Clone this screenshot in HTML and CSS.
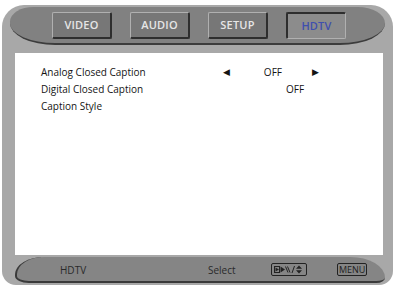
FILE: index.html
```html
<!DOCTYPE html>
<html>
<head>
  <title>HDTV Setup</title>
  <link rel="stylesheet" href="styles.css">
</head>
<body>
  <div class="tv-frame">
    <div class="top-band">
      <div class="tab">VIDEO</div>
      <div class="tab">AUDIO</div>
      <div class="tab">SETUP</div>
      <div class="tab selected">HDTV</div>
    </div>
    <div class="menu-panel">
      <div class="menu-row">
        <span class="item-name">Analog Closed Caption</span>
        <span class="item-value">
          <span class="arrow">&#9664;</span>
          <span class="value-text">OFF</span>
          <span class="arrow">&#9654;</span>
        </span>
      </div>
      <div class="menu-row">
        <span class="item-name">Digital Closed Caption</span>
        <span class="item-value plain">OFF</span>
      </div>
      <div class="menu-row">
        <span class="item-name">Caption Style</span>
      </div>
    </div>
    <div class="bottom-band">
      <span class="status-title">HDTV</span>
      <span class="status-select">Select</span>
      <span class="key-box nav-key">
        <svg width="30" height="9" viewBox="0 0 30 9">
          <rect x="0.5" y="1.5" width="5" height="6" fill="none" stroke="#222" stroke-width="1"/>
          <path d="M5 4.5 L1.5 2.5 L1.5 6.5 Z" fill="#222"/>
          <path d="M6.5 1.5 L11 4.5 L6.5 7.5 Z" fill="#222"/>
          <path d="M11.5 1.5 L14 7.5 M13.5 1.5 L16 7.5" stroke="#222" stroke-width="1" fill="none"/>
          <path d="M18 8 L20.5 1" stroke="#222" stroke-width="1"/>
          <path d="M25 0.5 L28 3.8 L22 3.8 Z M25 8.5 L28 5.2 L22 5.2 Z" fill="#222"/>
        </svg>
      </span>
      <span class="key-box">MENU</span>
    </div>
  </div>
</body>
</html>
```
FILE: styles.css
```css
body {
  margin: 0;
  background-color: #fff;
  font-family: "Open Sans", "Noto Sans", sans-serif;
}

.tv-frame {
  margin: 5px 2px 0 2px;
  height: 280px;
  background-color: #a8a8a8;
  border-radius: 22px 22px 14px 14px;
  display: flex;
  flex-direction: column;
  box-sizing: border-box;
  padding: 2px 8px 2px 8px;
}

.top-band {
  height: 38px;
  background-color: #818181;
  border-radius: 26px 30px 50px 50px / 16px 18px 24px 24px;
  border-bottom: 2px solid #3c3c3c;
  box-sizing: border-box;
  display: flex;
  align-items: center;
  padding: 1px 0 0 42px;
  gap: 18px;
}

.tab {
  width: 60px;
  height: 27px;
  box-sizing: border-box;
  background-color: #777;
  border-top: 1px solid #b0b0b0;
  border-left: 1px solid #b0b0b0;
  border-right: 2px solid #2e2e2e;
  border-bottom: 2px solid #2e2e2e;
  border-radius: 2px;
  color: #e6e6e6;
  font-weight: 600;
  font-size: 11px;
  display: flex;
  align-items: center;
  justify-content: center;
  letter-spacing: 0.2px;
}

.tab.selected {
  background-color: #8c8c8c;
  border-top: 2px solid #2e2e2e;
  border-left: 2px solid #2e2e2e;
  border-right: 1px solid #b0b0b0;
  border-bottom: 1px solid #b0b0b0;
  color: #3f4fae;
}

.menu-panel {
  margin: 8px 2px 0 5px;
  height: 203px;
  background-color: #fff;
  padding: 11px 0 0 26px;
  box-sizing: border-box;
}

.menu-row {
  height: 17px;
  font-size: 10px;
  color: #141414;
  display: flex;
  align-items: center;
}

.item-name {
  width: 182px;
}

.item-value {
  display: flex;
  align-items: center;
}

.item-value .arrow {
  font-family: "DejaVu Sans", sans-serif;
  font-size: 9px;
}

.value-text {
  width: 78px;
  padding-left: 4px;
  text-align: center;
}

.item-value.plain {
  padding-left: 63px;
}

.bottom-band {
  margin: 2px 0 0 5px;
  height: 26px;
  background-color: #858585;
  border-radius: 34px 40px 10px 16px / 20px 24px 6px 8px;
  border-bottom: 2px solid #3a3a3a;
  border-left: 2px solid #3a3a3a;
  box-sizing: border-box;
  display: flex;
  align-items: center;
  font-size: 10px;
  color: #2a2a2a;
  padding: 1px 0 0 43px;
}

.status-title {
  width: 148px;
}

.status-select {
  width: 63px;
}

.key-box {
  border: 1px solid #222;
  border-radius: 2px;
  padding: 0 1px;
  line-height: 11px;
  font-size: 9px;
  color: #1e1e1e;
}

.nav-key {
  display: flex;
  align-items: center;
  height: 11px;
  padding: 0 2px;
  margin-right: 30px;
}
```
